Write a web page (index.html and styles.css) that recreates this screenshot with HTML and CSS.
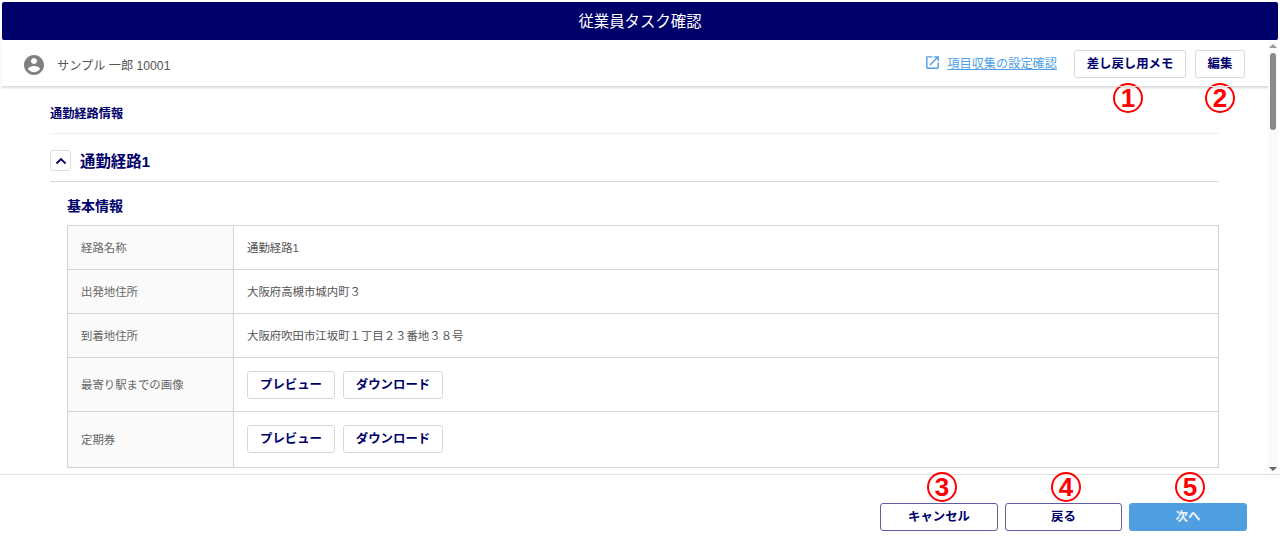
FILE: index.html
```html
<!DOCTYPE html>
<html lang="ja">
<head>
<meta charset="utf-8">
<title>従業員タスク確認</title>
<link rel="stylesheet" href="styles.css">
</head>
<body>
<div class="page">
  <header class="title-bar">従業員タスク確認</header>
  <div class="workspace">
    <div class="workspace-main">
      <div class="sub-bar">
        <div class="user">
          <svg class="user-icon" viewBox="0 0 24 24"><path d="M12 2C6.48 2 2 6.48 2 12s4.48 10 10 10 10-4.48 10-10S17.52 2 12 2zm0 3c1.66 0 3 1.34 3 3s-1.34 3-3 3-3-1.34-3-3 1.34-3 3-3zm0 14.2c-2.5 0-4.71-1.28-6-3.22.03-1.99 4-3.08 6-3.08s5.97 1.09 6 3.08c-1.29 1.94-3.5 3.22-6 3.22z"/></svg>
          <span>サンプル 一郎 10001</span>
        </div>
        <div class="actions">
          <a class="ext-link">
            <svg class="ext-icon" viewBox="0 0 24 24"><path d="M19 19H5V5h7V3H5c-1.11 0-2 .9-2 2v14c0 1.1.89 2 2 2h14c1.1 0 2-.9 2-2v-7h-2v7zM14 3v2h3.59l-9.83 9.83 1.41 1.41L19 6.41V10h2V3h-7z"/></svg>
            <span>項目収集の設定確認</span>
          </a>
          <button class="btn btn-memo">差し戻し用メモ</button>
          <button class="btn btn-edit">編集</button>
        </div>
      </div>
      <main class="content">
        <h2 class="section-title">通勤経路情報</h2>
        <div class="route-head">
          <button class="toggle"><svg viewBox="0 0 12 12"><path d="M1.5 8.5 6 4l4.5 4.5"/></svg></button>
          <h3 class="route-title">通勤経路1</h3>
        </div>
        <h4 class="block-title">基本情報</h4>
        <div class="info">
          <div class="row"><div class="label">経路名称</div><div class="value">通勤経路1</div></div>
          <div class="row"><div class="label">出発地住所</div><div class="value">大阪府高槻市城内町３</div></div>
          <div class="row"><div class="label">到着地住所</div><div class="value">大阪府吹田市江坂町１丁目２３番地３８号</div></div>
          <div class="row row-files"><div class="label">最寄り駅までの画像</div><div class="value"><button class="btn btn-preview">プレビュー</button><button class="btn btn-download">ダウンロード</button></div></div>
          <div class="row row-files row-last"><div class="label">定期券</div><div class="value"><button class="btn btn-preview">プレビュー</button><button class="btn btn-download">ダウンロード</button></div></div>
        </div>
      </main>
    </div>
    <div class="scrollbar">
      <span class="arrow arrow-up"></span>
      <span class="thumb"></span>
      <span class="arrow arrow-down"></span>
    </div>
  </div>
  <footer class="footer">
    <button class="foot-btn">キャンセル</button>
    <button class="foot-btn foot-back">戻る</button>
    <button class="foot-btn foot-next">次へ</button>
  </footer>
  <span class="mark mark-1">1</span>
  <span class="mark mark-2">2</span>
  <span class="mark mark-3">3</span>
  <span class="mark mark-4">4</span>
  <span class="mark mark-5">5</span>
</div>
</body>
</html>
```

FILE: styles.css
```css
* { box-sizing: border-box; }
html, body { margin: 0; padding: 0; background: #fff; }
body {
  font-family: "Liberation Sans", "Noto Sans CJK JP", sans-serif;
  color: #555;
  font-size: 12px;
}
.page {
  position: relative;
  width: 1280px;
  height: 556px;
  overflow: hidden;
  display: flex;
  flex-direction: column;
}
h2, h3, h4 { margin: 0; }
button { font-family: inherit; cursor: pointer; }

.title-bar {
  margin: 2px 2px 0;
  height: 38px;
  padding-bottom: 2px;
  flex: none;
  background: #00006a;
  color: #fff;
  border-radius: 2px;
  font-size: 15.4px;
  display: flex;
  align-items: center;
  justify-content: center;
}
.workspace { flex: 1; min-height: 0; display: flex; overflow: hidden; }
.workspace-main { flex: 1; min-width: 0; display: flex; flex-direction: column; overflow: hidden; }
.sub-bar {
  flex: none;
  height: 47px;
  margin-left: 2px;
  padding: 1px 23px 0 20px;
  display: flex;
  align-items: center;
  justify-content: space-between;
  border-bottom: 1px solid #ddd;
  box-shadow: 0 1px 2px rgba(0, 0, 0, .15);
  position: relative;
  z-index: 1;
}
.user { display: flex; align-items: center; gap: 11px; padding-top: 2px; font-size: 12.2px; color: #555; }
.user-icon { width: 24px; height: 24px; fill: #808080; }
.actions { display: flex; align-items: center; }
.ext-link { display: flex; align-items: center; gap: 6px; padding-bottom: 2px; color: #4f9fe6; text-decoration: underline; margin-right: 17px; font-size: 12.2px; }
.ext-icon { width: 17px; height: 17px; fill: #4f9fe6; }
.btn {
  height: 28px;
  padding: 0 0 2px;
  background: #fff;
  border: 1px solid #d8d8d8;
  border-radius: 3px;
  color: #00006a;
  font-size: 12.4px;
  font-weight: 700;
}
.btn-memo { width: 112px; margin-right: 9px; }
.btn-edit { width: 50px; }

.content { flex: 1; min-height: 0; padding: 0 49px 0 50px; }
.section-title {
  height: 47px;
  padding-top: 19px;
  border-bottom: 1px solid #eee;
  color: #00006a;
  font-size: 12.2px;
  line-height: 17px;
}
.route-head {
  height: 48px;
  padding-top: 6px;
  display: flex;
  align-items: center;
  gap: 9px;
  border-bottom: 1px solid #d8d8d8;
}
.toggle {
  width: 21px;
  height: 21px;
  padding: 0;
  background: #fff;
  border: 1px solid #ddd;
  border-radius: 3px;
  display: flex;
  align-items: center;
  justify-content: center;
}
.toggle svg { width: 12px; height: 12px; fill: none; stroke: #00006a; stroke-width: 1.8; }
.route-title { padding-bottom: 2px; color: #00006a; font-size: 15.4px; }
.block-title {
  margin: 15px 0 0 17px;
  height: 28px;
  color: #00006a;
  font-size: 14px;
  line-height: 18px;
}
.info { margin-left: 17px; border: 1px solid #d4d4d4; border-bottom: 0; }
.row { display: flex; height: 44px; border-bottom: 1px solid #d4d4d4; }
.row-files { height: 54px; }
.row-last { height: 56px; }
.label {
  flex: none;
  width: 166px;
  padding: 0 0 2px 13px;
  display: flex;
  align-items: center;
  background: #fafafa;
  border-right: 1px solid #d4d4d4;
  font-size: 11.4px;
  color: #666;
}
.value { flex: 1; padding: 0 0 2px 13px; display: flex; align-items: center; font-size: 11.4px; color: #555; gap: 8px; }
.row-files .value { padding-bottom: 0; }
.row-last .value { padding-bottom: 1px; }
.btn-preview { width: 88px; }
.btn-download { width: 100px; }

.scrollbar {
  flex: none;
  width: 10px;
  margin-right: 2px;
  background: #fafafa;
  display: flex;
  flex-direction: column;
  align-items: center;
}
.thumb { width: 6px; height: 77px; background: #8a8a8a; border-radius: 3px; }
.arrow { width: 0; height: 0; border-left: 4px solid transparent; border-right: 4px solid transparent; }
.arrow-up { border-bottom: 4px solid #999; margin-top: 4px; margin-bottom: 5px; }
.arrow-down { border-top: 4px solid #666; margin-top: auto; margin-bottom: 3px; }

.footer {
  flex: none;
  height: 82px;
  border-top: 1px solid #e2e2e2;
  display: flex;
  align-items: flex-start;
  gap: 7px;
  padding: 28px 33px 0 0;
  justify-content: flex-end;
}
.foot-btn {
  width: 118px;
  height: 28px;
  padding: 0 0 2px;
  background: #fff;
  border: 1px solid #5f5fa6;
  border-radius: 3px;
  color: #00006a;
  font-size: 12.4px;
  font-weight: 700;
}
.foot-back { width: 117px; }
.foot-next { background: #4f9fe0; border-color: #4f9fe0; color: #e8f3fc; }

.mark {
  position: absolute;
  width: 30px;
  height: 30px;
  border: 2px solid #f00;
  border-radius: 50%;
  color: #f00;
  font-size: 26px;
  font-weight: 700;
  line-height: 26px;
  text-align: center;
}
.mark-1 { left: 1113px; top: 83px; }
.mark-2 { left: 1205px; top: 83px; }
.mark-3 { left: 927px; top: 472px; }
.mark-4 { left: 1051px; top: 472px; }
.mark-5 { left: 1175px; top: 472px; }
```
